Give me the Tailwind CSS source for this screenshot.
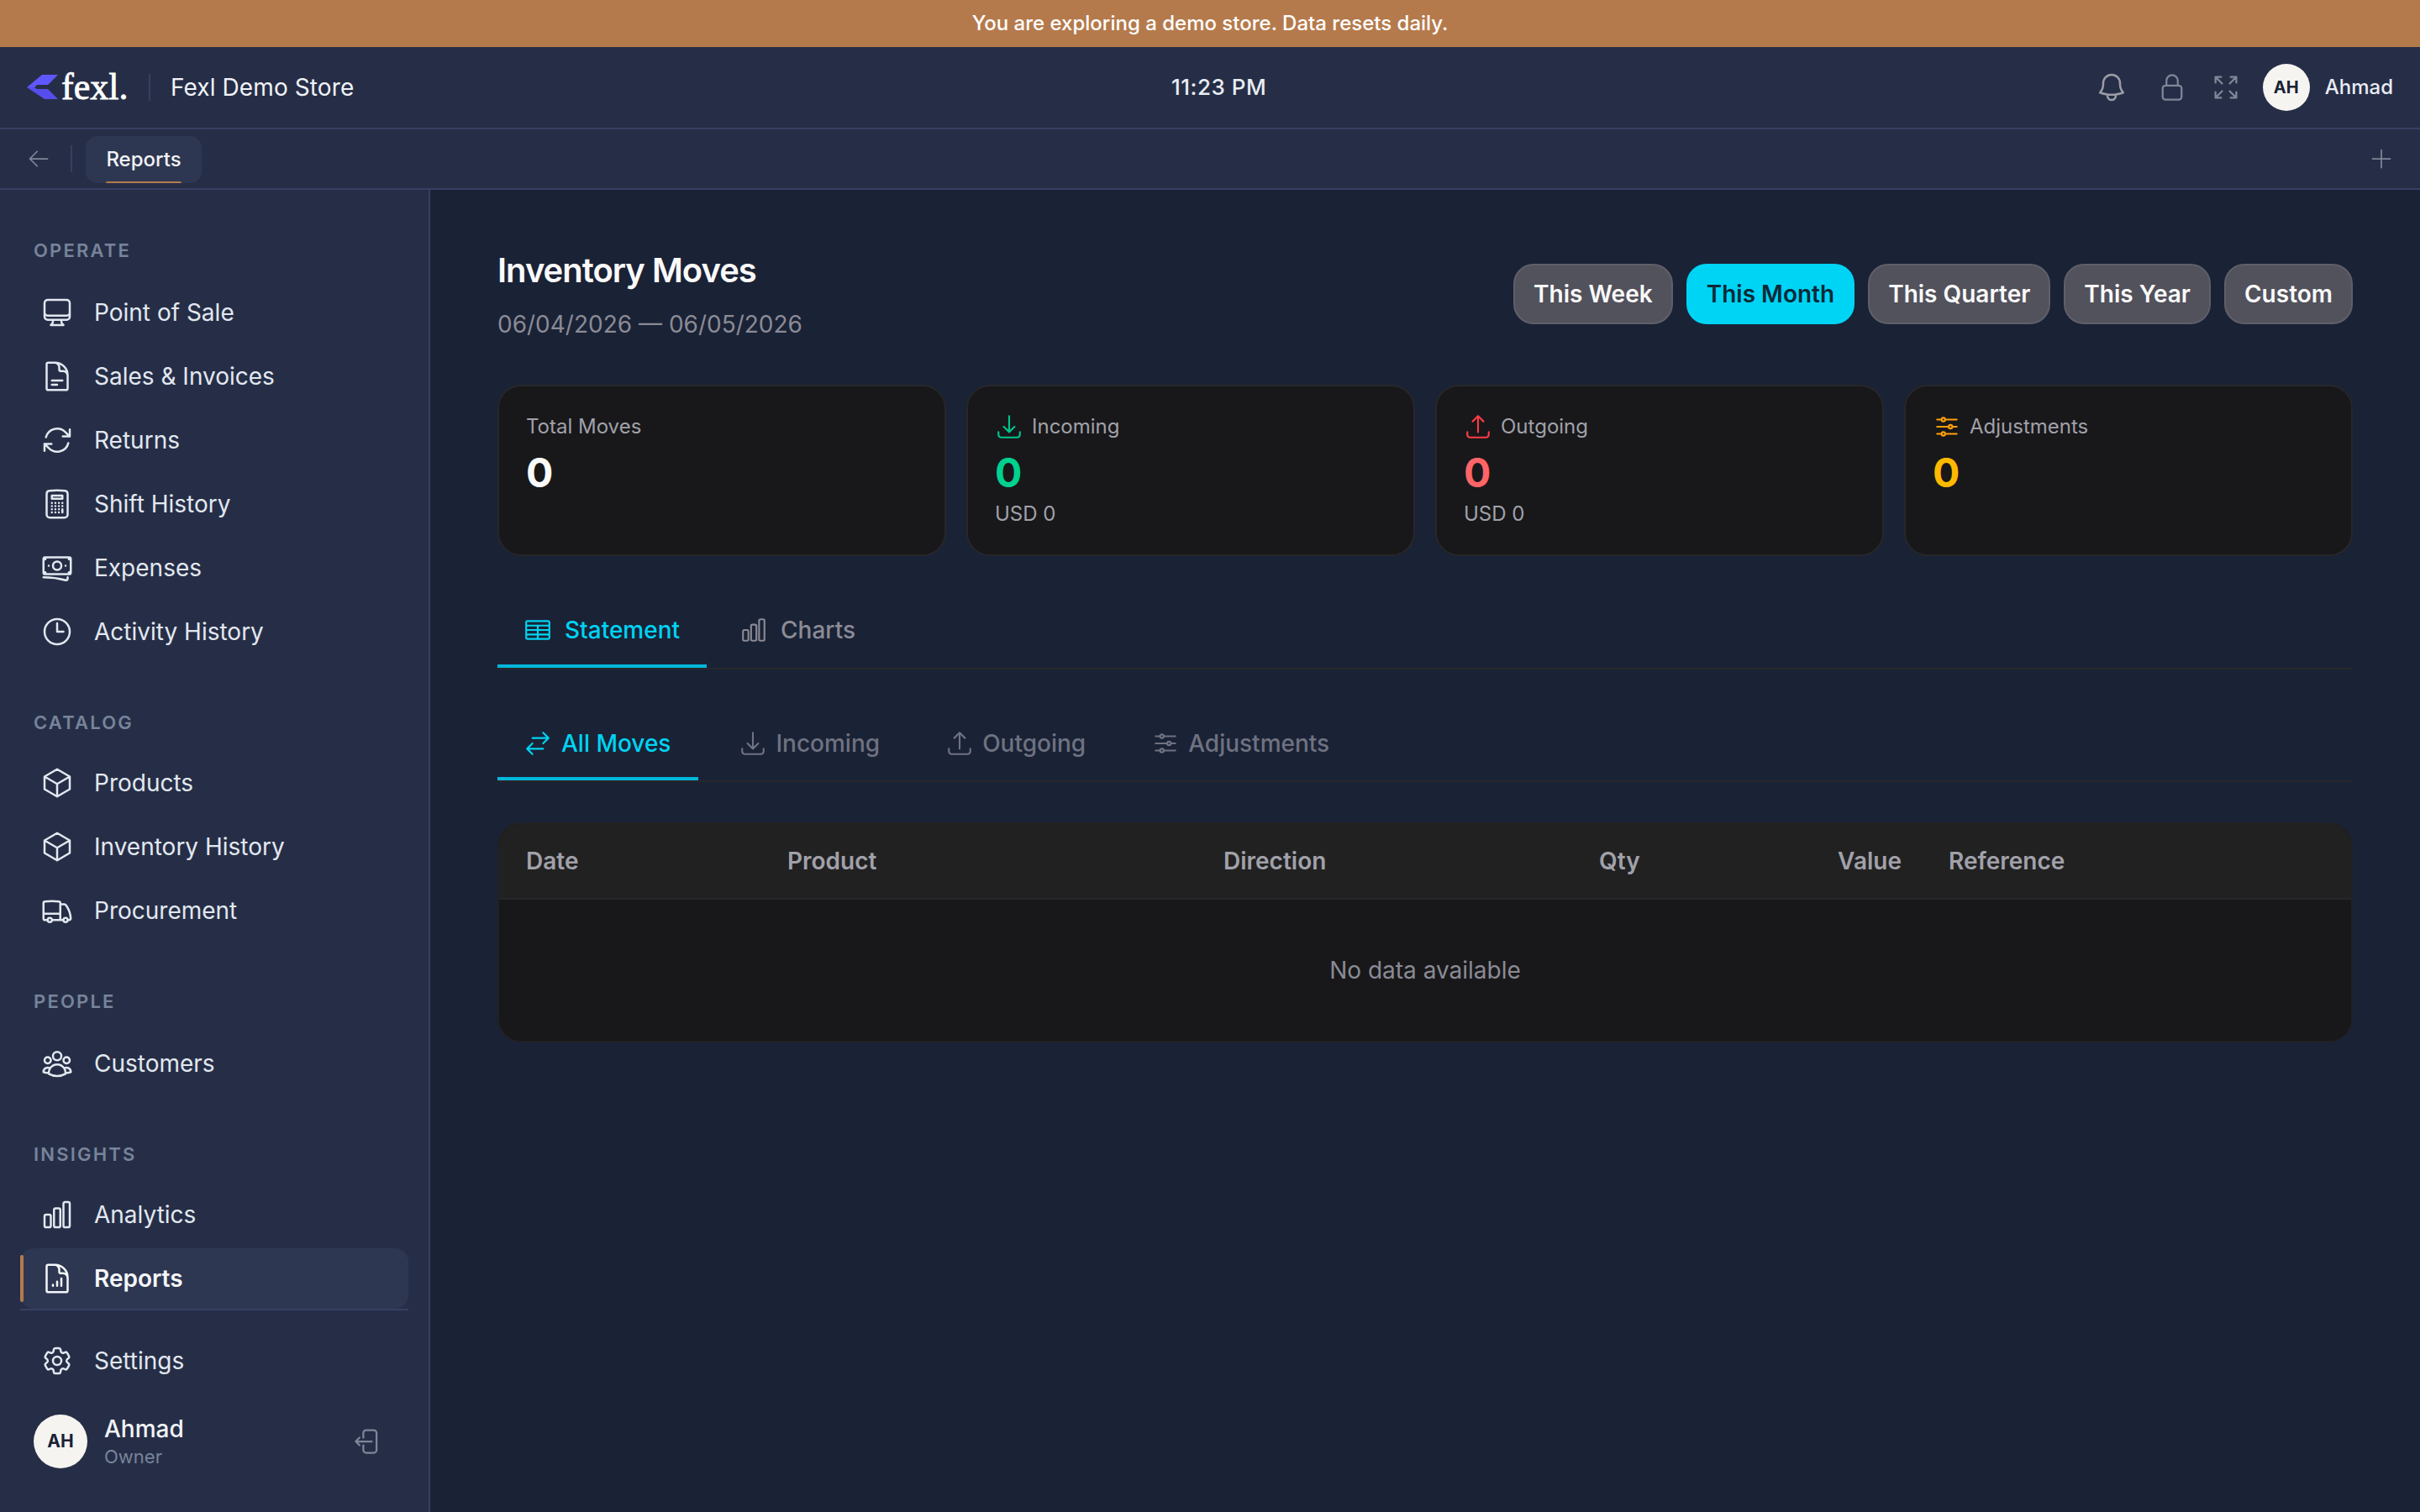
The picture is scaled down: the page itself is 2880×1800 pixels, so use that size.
<!DOCTYPE html>
<html lang="en">
<head>
<meta charset="UTF-8">
<title>Fexl Demo Store - Reports</title>
<script src="https://cdn.jsdelivr.net/npm/@tailwindcss/browser@4"></script>
</head>
<body class="bg-[#1a2236] font-['Inter','Noto_Sans',sans-serif] text-white w-[2880px] h-[1800px] overflow-hidden flex flex-col">
  <!-- demo banner -->
  <div class="h-[56px] shrink-0 bg-[#b57a4c] flex items-center justify-center text-[24px] font-medium text-white">You are exploring a demo store. Data resets daily.</div>

  <!-- top bar -->
  <header class="h-[98px] shrink-0 bg-[#262e47] border-b-2 border-[#373f63] flex items-center pl-[32px] pr-[32px] relative">
    <svg class="w-[38px] h-[30px] shrink-0" viewBox="0 0 38 30"><path fill="#5f57ff" d="M0 15 18 0h19L25 12H12l-3 3z"/><path fill="#554eea" d="M0 15h9l3 2h13l12 12H21z"/></svg>
    <span class="ml-[3px] w-[80px] font-['Liberation_Serif',serif] font-normal text-[44px] leading-none text-white [-webkit-text-stroke:0.8px_white]">fexl.</span>
    <div class="ml-[24px] w-[2px] h-[32px] bg-[#373f63]"></div>
    <span class="ml-[24px] text-[28px] font-normal tracking-[0.1px] text-[#f1f3f7]">Fexl Demo Store</span>
    <span class="absolute left-[1394px] -mt-[2px] text-[26px] font-medium tracking-[0.5px] text-[#e9ecf3]">11:23 PM</span>
    <div class="ml-auto flex items-center">
      <svg class="w-[40px] h-[40px] text-[#9a9ca6]" fill="none" viewBox="0 0 24 24" stroke="currentColor" stroke-width="1.5"><path stroke-linecap="round" stroke-linejoin="round" d="M14.857 17.082a23.848 23.848 0 0 0 5.454-1.31A8.967 8.967 0 0 1 18 9.75V9A6 6 0 0 0 6 9v.75a8.967 8.967 0 0 1-2.312 6.022c1.733.64 3.56 1.085 5.455 1.31m5.714 0a24.255 24.255 0 0 1-5.714 0m5.714 0a3 3 0 1 1-5.714 0"/></svg>
      <svg class="ml-[34px] w-[36px] h-[36px] text-[#7e8798]" fill="none" viewBox="0 0 24 24" stroke="currentColor" stroke-width="1.5"><path stroke-linecap="round" stroke-linejoin="round" d="M16.5 10.5V6.75a4.5 4.5 0 1 0-9 0v3.75m-.75 11.25h10.5a2.25 2.25 0 0 0 2.25-2.25v-6.75a2.25 2.25 0 0 0-2.25-2.25H6.75a2.25 2.25 0 0 0-2.25 2.25v6.75a2.25 2.25 0 0 0 2.25 2.25Z"/></svg>
      <svg class="ml-[28px] w-[36px] h-[36px] text-[#7e8798]" fill="none" viewBox="0 0 24 24" stroke="currentColor" stroke-width="1.5"><path stroke-linecap="round" stroke-linejoin="round" d="M3.75 3.75v4.5m0-4.5h4.5m-4.5 0L9 9M3.75 20.25v-4.5m0 4.5h4.5m-4.5 0L9 15M20.25 3.75h-4.5m4.5 0v4.5m0-4.5L15 9m5.25 11.25h-4.5m4.5 0v-4.5m0 4.5L15 15"/></svg>
      <div class="ml-[26px] w-[56px] h-[56px] rounded-full bg-[#f5f4f1] text-[#1a2236] flex items-center justify-center text-[20px] font-bold">AH</div>
      <span class="ml-[18px] text-[24px] font-medium text-[#e9ecf3]">Ahmad</span>
    </div>
  </header>

  <!-- tab strip -->
  <div class="h-[72px] shrink-0 bg-[#262e47] border-b-2 border-[#373f63] flex items-center pl-[32px] pr-[32px]">
    <svg class="w-[28px] h-[28px] text-[#7e8798]" fill="none" viewBox="0 0 24 24" stroke="currentColor" stroke-width="1.5"><path stroke-linecap="round" stroke-linejoin="round" d="M10.5 19.5 3 12m0 0 7.5-7.5M3 12h18"/></svg>
    <div class="ml-[24px] w-[2px] h-[32px] bg-[#373f63]"></div>
    <div class="ml-[16px] mt-[2px] relative h-[56px] w-[138px] rounded-[14px] bg-[#2e3751] flex items-center justify-center text-[24px] font-medium text-[#f1f3f7]">
      Reports
      <div class="absolute bottom-0 left-[24px] right-[24px] h-[2px] rounded-t bg-[#b57a4c]"></div>
    </div>
    <svg class="ml-auto w-[28px] h-[28px] text-[#7e8798]" fill="none" viewBox="0 0 24 24" stroke="currentColor" stroke-width="1.5"><path stroke-linecap="round" stroke-linejoin="round" d="M12 3v18m9-9H3"/></svg>
  </div>

  <div class="flex-1 flex min-h-0">
    <!-- sidebar -->
    <aside class="w-[512px] shrink-0 bg-[#262e47] border-r-2 border-[#373f63] flex flex-col pl-[24px] pr-[24px]">
      <div class="flex-1">
        <div class="h-[110px] pl-[16px] pt-[57px] text-[22px] leading-[30px] font-semibold tracking-[2.2px] text-[#77849a]">OPERATE</div>
        <nav class="flex flex-col gap-[4px] text-[28px] text-[#e2e8f0]">
          <a class="h-[72px] flex items-center gap-[24px] pl-[24px]"><svg class="w-[40px] h-[40px]" fill="none" viewBox="0 0 24 24" stroke="currentColor" stroke-width="1.5"><path stroke-linecap="round" stroke-linejoin="round" d="M9 17.25v1.007a3 3 0 0 1-.879 2.122L7.5 21h9l-.621-.621A3 3 0 0 1 15 18.257V17.25m6-12V15a2.25 2.25 0 0 1-2.25 2.25H5.25A2.25 2.25 0 0 1 3 15V5.25m18 0A2.25 2.25 0 0 0 18.75 3H5.25A2.25 2.25 0 0 0 3 5.25m18 0V12a2.25 2.25 0 0 1-2.25 2.25H5.25A2.25 2.25 0 0 1 3 12V5.25"/></svg>Point of Sale</a>
          <a class="h-[72px] flex items-center gap-[24px] pl-[24px]"><svg class="w-[40px] h-[40px]" fill="none" viewBox="0 0 24 24" stroke="currentColor" stroke-width="1.5"><path stroke-linecap="round" stroke-linejoin="round" d="M19.5 14.25v-2.625a3.375 3.375 0 0 0-3.375-3.375h-1.5A1.125 1.125 0 0 1 13.5 7.125v-1.5a3.375 3.375 0 0 0-3.375-3.375H8.25m0 12.75h7.5m-7.5 3H12M10.5 2.25H5.625c-.621 0-1.125.504-1.125 1.125v17.25c0 .621.504 1.125 1.125 1.125h12.75c.621 0 1.125-.504 1.125-1.125V11.25a9 9 0 0 0-9-9Z"/></svg>Sales &amp; Invoices</a>
          <a class="h-[72px] flex items-center gap-[24px] pl-[24px]"><svg class="w-[40px] h-[40px]" fill="none" viewBox="0 0 24 24" stroke="currentColor" stroke-width="1.5"><path stroke-linecap="round" stroke-linejoin="round" d="M16.023 9.348h4.992v-.001M2.985 19.644v-4.992m0 0h4.992m-4.993 0 3.181 3.183a8.25 8.25 0 0 0 13.803-3.7M4.031 9.865a8.25 8.25 0 0 1 13.803-3.7l3.181 3.182m0-4.991v4.99"/></svg>Returns</a>
          <a class="h-[72px] flex items-center gap-[24px] pl-[24px]"><svg class="w-[40px] h-[40px]" fill="none" viewBox="0 0 24 24" stroke="currentColor" stroke-width="1.5"><path stroke-linecap="round" stroke-linejoin="round" d="M15.75 15.75V18m-7.5-6.75h.008v.008H8.25v-.008Zm0 2.25h.008v.008H8.25V13.5Zm0 2.25h.008v.008H8.25v-.008Zm0 2.25h.008v.008H8.25V18Zm2.498-6.75h.007v.008h-.007v-.008Zm0 2.25h.007v.008h-.007V13.5Zm0 2.25h.007v.008h-.007v-.008Zm0 2.25h.007v.008h-.007V18Zm2.504-6.75h.008v.008h-.008v-.008Zm0 2.25h.008v.008h-.008V13.5Zm0 2.25h.008v.008h-.008v-.008Zm0 2.25h.008v.008h-.008V18Zm2.498-6.75h.008v.008h-.008v-.008Zm0 2.25h.008v.008h-.008V13.5ZM8.25 6h7.5v2.25h-7.5V6ZM12 2.25c-1.892 0-3.758.11-5.593.322C5.307 2.7 4.5 3.65 4.5 4.757V19.5a2.25 2.25 0 0 0 2.25 2.25h10.5a2.25 2.25 0 0 0 2.25-2.25V4.757c0-1.108-.806-2.057-1.907-2.185A48.507 48.507 0 0 0 12 2.25Z"/></svg>Shift History</a>
          <a class="h-[72px] flex items-center gap-[24px] pl-[24px]"><svg class="w-[40px] h-[40px]" fill="none" viewBox="0 0 24 24" stroke="currentColor" stroke-width="1.5"><path stroke-linecap="round" stroke-linejoin="round" d="M2.25 18.75a60.07 60.07 0 0 1 15.797 2.101c.727.198 1.453-.342 1.453-1.096V18.75M3.75 4.5v.75A.75.75 0 0 1 3 6h-.75m0 0v-.375c0-.621.504-1.125 1.125-1.125H20.25M2.25 6v9m18-10.5v.75c0 .414.336.75.75.75h.75m-1.5-1.5h.375c.621 0 1.125.504 1.125 1.125v9.75c0 .621-.504 1.125-1.125 1.125h-.375m1.5-1.5H21a.75.75 0 0 0-.75.75v.75m0 0H3.75m0 0h-.375a1.125 1.125 0 0 1-1.125-1.125V15m1.5 1.5v-.75A.75.75 0 0 0 3 15h-.75M15 10.5a3 3 0 1 1-6 0 3 3 0 0 1 6 0Zm3 0h.008v.008H18V10.5Zm-12 0h.008v.008H6V10.5Z"/></svg>Expenses</a>
          <a class="h-[72px] flex items-center gap-[24px] pl-[24px]"><svg class="w-[40px] h-[40px]" fill="none" viewBox="0 0 24 24" stroke="currentColor" stroke-width="1.5"><path stroke-linecap="round" stroke-linejoin="round" d="M12 6v6h4.5m4.5 0a9 9 0 1 1-18 0 9 9 0 0 1 18 0Z"/></svg>Activity History</a>
        </nav>
        <div class="h-[108px] pl-[16px] pt-[57px] text-[22px] leading-[30px] font-semibold tracking-[2.2px] text-[#77849a]">CATALOG</div>
        <nav class="flex flex-col gap-[4px] text-[28px] text-[#e2e8f0]">
          <a class="h-[72px] flex items-center gap-[24px] pl-[24px]"><svg class="w-[40px] h-[40px]" fill="none" viewBox="0 0 24 24" stroke="currentColor" stroke-width="1.5"><path stroke-linecap="round" stroke-linejoin="round" d="m21 7.5-9-5.25L3 7.5m18 0-9 5.25m9-5.25v9l-9 5.25M3 7.5l9 5.25M3 7.5v9l9 5.25m0-9v9"/></svg>Products</a>
          <a class="h-[72px] flex items-center gap-[24px] pl-[24px]"><svg class="w-[40px] h-[40px]" fill="none" viewBox="0 0 24 24" stroke="currentColor" stroke-width="1.5"><path stroke-linecap="round" stroke-linejoin="round" d="m21 7.5-9-5.25L3 7.5m18 0-9 5.25m9-5.25v9l-9 5.25M3 7.5l9 5.25M3 7.5v9l9 5.25m0-9v9"/></svg>Inventory History</a>
          <a class="h-[72px] flex items-center gap-[24px] pl-[24px]"><svg class="w-[40px] h-[40px]" fill="none" viewBox="0 0 24 24" stroke="currentColor" stroke-width="1.5"><path stroke-linecap="round" stroke-linejoin="round" d="M8.25 18.75a1.5 1.5 0 0 1-3 0m3 0a1.5 1.5 0 0 0-3 0m3 0h6m-9 0H3.375a1.125 1.125 0 0 1-1.125-1.125V14.25m17.25 4.5a1.5 1.5 0 0 1-3 0m3 0a1.5 1.5 0 0 0-3 0m3 0h1.125c.621 0 1.129-.504 1.09-1.124a17.902 17.902 0 0 0-3.213-9.193 2.056 2.056 0 0 0-1.58-.86H14.25M16.5 18.75h-2.25m0-11.177v-.958c0-.568-.422-1.048-.987-1.106a48.554 48.554 0 0 0-10.026 0 1.106 1.106 0 0 0-.987 1.106v7.635m12-6.677v6.677m0 4.5v-4.5m0 0h-12"/></svg>Procurement</a>
        </nav>
        <div class="h-[110px] pl-[16px] pt-[57px] text-[22px] leading-[30px] font-semibold tracking-[2.2px] text-[#77849a]">PEOPLE</div>
        <nav class="flex flex-col gap-[4px] text-[28px] text-[#e2e8f0]">
          <a class="h-[72px] flex items-center gap-[24px] pl-[24px]"><svg class="w-[40px] h-[40px]" fill="none" viewBox="0 0 24 24" stroke="currentColor" stroke-width="1.5"><path stroke-linecap="round" stroke-linejoin="round" d="M18 18.72a9.094 9.094 0 0 0 3.741-.479 3 3 0 0 0-4.682-2.72m.94 3.198.001.031c0 .225-.012.447-.037.666A11.944 11.944 0 0 1 12 21c-2.17 0-4.207-.576-5.963-1.584A6.062 6.062 0 0 1 6 18.719m12 0a5.971 5.971 0 0 0-.941-3.197m0 0A5.995 5.995 0 0 0 12 12.75a5.995 5.995 0 0 0-5.058 2.772m0 0a3 3 0 0 0-4.681 2.72 8.986 8.986 0 0 0 3.74.477m.94-3.197a5.971 5.971 0 0 0-.94 3.197M15 6.75a3 3 0 1 1-6 0 3 3 0 0 1 6 0Zm6 3a2.25 2.25 0 1 1-4.5 0 2.25 2.25 0 0 1 4.5 0Zm-13.5 0a2.25 2.25 0 1 1-4.5 0 2.25 2.25 0 0 1 4.5 0Z"/></svg>Customers</a>
        </nav>
        <div class="h-[108px] pl-[16px] pt-[57px] text-[22px] leading-[30px] font-semibold tracking-[2.2px] text-[#77849a]">INSIGHTS</div>
        <nav class="flex flex-col gap-[4px] text-[28px] text-[#e2e8f0]">
          <a class="h-[72px] flex items-center gap-[24px] pl-[24px]"><svg class="w-[40px] h-[40px]" fill="none" viewBox="0 0 24 24" stroke="currentColor" stroke-width="1.5"><path stroke-linecap="round" stroke-linejoin="round" d="M3 13.125C3 12.504 3.504 12 4.125 12h2.25c.621 0 1.125.504 1.125 1.125v6.75C7.5 20.496 6.996 21 6.375 21h-2.25A1.125 1.125 0 0 1 3 19.875v-6.75ZM9.75 8.625c0-.621.504-1.125 1.125-1.125h2.25c.621 0 1.125.504 1.125 1.125v11.25c0 .621-.504 1.125-1.125 1.125h-2.25a1.125 1.125 0 0 1-1.125-1.125V8.625ZM16.5 4.125c0-.621.504-1.125 1.125-1.125h2.25C20.496 3 21 3.504 21 4.125v15.75c0 .621-.504 1.125-1.125 1.125h-2.25a1.125 1.125 0 0 1-1.125-1.125V4.125Z"/></svg>Analytics</a>
          <a class="relative h-[72px] flex items-center gap-[24px] pl-[24px] rounded-[16px] bg-[#2e3751] font-semibold text-[#f4f6fa]"><span class="absolute left-0 top-[8px] bottom-[8px] w-[4px] rounded-full bg-[#b57a4c]"></span><svg class="w-[40px] h-[40px]" fill="none" viewBox="0 0 24 24" stroke="currentColor" stroke-width="1.5"><path stroke-linecap="round" stroke-linejoin="round" d="M19.5 14.25v-2.625a3.375 3.375 0 0 0-3.375-3.375h-1.5A1.125 1.125 0 0 1 13.5 7.125v-1.5a3.375 3.375 0 0 0-3.375-3.375H8.25M9 16.5v.75m3-3v3M15 12v5.25m-4.5-15H5.625c-.621 0-1.125.504-1.125 1.125v17.25c0 .621.504 1.125 1.125 1.125h12.75c.621 0 1.125-.504 1.125-1.125V11.25a9 9 0 0 0-9-9Z"/></svg>Reports</a>
        </nav>
      </div>
      <!-- sidebar footer -->
      <div class="border-t-2 border-[#373f63] h-[242px] shrink-0">
        <a class="mt-[24px] h-[72px] flex items-center gap-[24px] pl-[24px] text-[28px] text-[#e2e8f0]"><svg class="w-[40px] h-[40px]" fill="none" viewBox="0 0 24 24" stroke="currentColor" stroke-width="1.5"><path stroke-linecap="round" stroke-linejoin="round" d="M9.594 3.94c.09-.542.56-.94 1.11-.94h2.593c.55 0 1.02.398 1.11.94l.213 1.281c.063.374.313.686.645.87.074.04.147.083.22.127.325.196.72.257 1.075.124l1.217-.456a1.125 1.125 0 0 1 1.37.49l1.296 2.247a1.125 1.125 0 0 1-.26 1.431l-1.003.827c-.293.241-.438.613-.43.992a7.723 7.723 0 0 1 0 .255c-.008.378.137.75.43.991l1.004.827c.424.35.534.955.26 1.43l-1.298 2.247a1.125 1.125 0 0 1-1.369.491l-1.217-.456c-.355-.133-.75-.072-1.076.124a6.47 6.47 0 0 1-.22.128c-.331.183-.581.495-.644.869l-.213 1.281c-.09.543-.56.94-1.11.94h-2.594c-.55 0-1.019-.398-1.11-.94l-.213-1.281c-.062-.374-.312-.686-.644-.87a6.52 6.52 0 0 1-.22-.127c-.325-.196-.72-.257-1.076-.124l-1.217.456a1.125 1.125 0 0 1-1.369-.49l-1.297-2.247a1.125 1.125 0 0 1 .26-1.431l1.004-.827c.292-.24.437-.613.43-.991a6.932 6.932 0 0 1 0-.255c.007-.38-.138-.751-.43-.992l-1.004-.827a1.125 1.125 0 0 1-.26-1.43l1.297-2.247a1.125 1.125 0 0 1 1.37-.491l1.216.456c.356.133.751.072 1.076-.124.072-.044.146-.086.22-.128.332-.183.582-.495.644-.869l.214-1.28Z"/><path stroke-linecap="round" stroke-linejoin="round" d="M15 12a3 3 0 1 1-6 0 3 3 0 0 1 6 0Z"/></svg>Settings</a>
        <div class="mt-[27px] pl-[16px] flex items-center">
          <div class="w-[64px] h-[64px] rounded-full bg-[#f5f4f1] text-[#1a2236] flex items-center justify-center text-[21px] font-bold">AH</div>
          <div class="ml-[20px] flex flex-col">
            <span class="text-[28px] leading-[36px] font-medium text-[#f1f3f7]">Ahmad</span>
            <span class="text-[22px] leading-[30px] text-[#77849a]">Owner</span>
          </div>
          <svg class="ml-auto mr-[30px] w-[36px] h-[36px] text-[#7e8798]" fill="none" viewBox="0 0 24 24" stroke="currentColor" stroke-width="1.5"><path stroke-linecap="round" stroke-linejoin="round" d="M8.25 9V5.25A2.25 2.25 0 0 1 10.5 3h6a2.25 2.25 0 0 1 2.25 2.25v13.5A2.25 2.25 0 0 1 16.5 21h-6a2.25 2.25 0 0 1-2.25-2.25V15m-3 0-3-3m0 0 3-3m-3 3H15"/></svg>
        </div>
      </div>
    </aside>

    <!-- main -->
    <main class="flex-1 pl-[80px] pr-[80px] pt-[72px]">
      <div class="flex justify-between items-start">
        <div>
          <h1 class="text-[40px] leading-[48px] font-semibold tracking-[-1px] text-[#fafafa]">Inventory Moves</h1>
          <p class="mt-[22px] text-[28px] leading-[36px] text-[#8b8b95]">06/04/2026 — 06/05/2026</p>
        </div>
        <div class="mt-[16px] flex gap-[16px] text-[28px] font-semibold">
          <button class="h-[72px] px-[22px] rounded-[24px] bg-[#52525c] border-2 border-[#5f5f69] text-[#fafafa]">This Week</button>
          <button class="h-[72px] px-[24px] rounded-[24px] bg-[#00d4f5] text-[#0a2a38]">This Month</button>
          <button class="h-[72px] px-[22px] rounded-[24px] bg-[#52525c] border-2 border-[#5f5f69] text-[#fafafa]">This Quarter</button>
          <button class="h-[72px] px-[22px] rounded-[24px] bg-[#52525c] border-2 border-[#5f5f69] text-[#fafafa]">This Year</button>
          <button class="h-[72px] px-[22px] rounded-[24px] bg-[#52525c] border-2 border-[#5f5f69] text-[#fafafa]">Custom</button>
        </div>
      </div>

      <!-- stat cards -->
      <div class="mt-[54px] grid grid-cols-4 gap-[24px]">
        <div class="h-[204px] rounded-[28px] bg-[#18181a] border-2 border-[#27272a] px-[32px] pt-[30px]">
          <div class="h-[36px] flex items-center text-[24px] text-[#a1a1aa]">Total Moves</div>
          <div class="mt-[7px] text-[48px] leading-[60px] font-bold text-[#fafafa]">0</div>
        </div>
        <div class="h-[204px] rounded-[28px] bg-[#18181a] border-2 border-[#27272a] px-[32px] pt-[30px]">
          <div class="h-[36px] flex items-center gap-[10px] text-[24px] text-[#a1a1aa]"><svg class="w-[34px] h-[34px] text-[#00c48c]" fill="none" viewBox="0 0 24 24" stroke="currentColor" stroke-width="1.5"><path stroke-linecap="round" stroke-linejoin="round" d="M3 16.5v2.25A2.25 2.25 0 0 0 5.25 21h13.5A2.25 2.25 0 0 0 21 18.75V16.5M16.5 12 12 16.5m0 0L7.5 12m4.5 4.5V3"/></svg>Incoming</div>
          <div class="mt-[7px] text-[48px] leading-[60px] font-bold text-[#00d18f]">0</div>
          <div class="mt-[1px] text-[24px] leading-[36px] text-[#a1a1aa]">USD 0</div>
        </div>
        <div class="h-[204px] rounded-[28px] bg-[#18181a] border-2 border-[#27272a] px-[32px] pt-[30px]">
          <div class="h-[36px] flex items-center gap-[10px] text-[24px] text-[#a1a1aa]"><svg class="w-[34px] h-[34px] text-[#ff3b47]" fill="none" viewBox="0 0 24 24" stroke="currentColor" stroke-width="1.5"><path stroke-linecap="round" stroke-linejoin="round" d="M3 16.5v2.25A2.25 2.25 0 0 0 5.25 21h13.5A2.25 2.25 0 0 0 21 18.75V16.5m-13.5-9L12 3m0 0 4.5 4.5M12 3v13.5"/></svg>Outgoing</div>
          <div class="mt-[7px] text-[48px] leading-[60px] font-bold text-[#ff6467]">0</div>
          <div class="mt-[1px] text-[24px] leading-[36px] text-[#a1a1aa]">USD 0</div>
        </div>
        <div class="h-[204px] rounded-[28px] bg-[#18181a] border-2 border-[#27272a] px-[32px] pt-[30px]">
          <div class="h-[36px] flex items-center gap-[10px] text-[24px] text-[#a1a1aa]"><svg class="w-[34px] h-[34px] text-[#ff9f0a]" fill="none" viewBox="0 0 24 24" stroke="currentColor" stroke-width="1.5"><path stroke-linecap="round" stroke-linejoin="round" d="M10.5 6h9.75M10.5 6a1.5 1.5 0 1 1-3 0m3 0a1.5 1.5 0 1 0-3 0M3.75 6H7.5m3 12h9.75m-9.75 0a1.5 1.5 0 0 1-3 0m3 0a1.5 1.5 0 0 0-3 0m-3.75 0H7.5m9-6h3.75m-3.75 0a1.5 1.5 0 0 1-3 0m3 0a1.5 1.5 0 0 0-3 0m-9.75 0h9.75"/></svg>Adjustments</div>
          <div class="mt-[7px] text-[48px] leading-[60px] font-bold text-[#ffb900]">0</div>
        </div>
      </div>

      <!-- view tabs -->
      <div class="mt-[49px] h-[86px] border-b-2 border-[#27272a] flex gap-[8px] text-[28px] font-medium">
        <div class="h-[84px] pb-[2px] pl-[31px] pr-[32px] flex items-center gap-[15px] border-b-4 border-[#00b8db] text-[#00d3f2]"><svg class="w-[34px] h-[34px]" fill="none" viewBox="0 0 24 24" stroke="currentColor" stroke-width="1.5"><path stroke-linecap="round" stroke-linejoin="round" d="M3.375 19.5h17.25m-17.25 0a1.125 1.125 0 0 1-1.125-1.125M3.375 19.5h7.5c.621 0 1.125-.504 1.125-1.125m-9.75 0V5.625m0 12.75v-1.5c0-.621.504-1.125 1.125-1.125m18.375 2.625V5.625m0 12.75c0 .621-.504 1.125-1.125 1.125m1.125-1.125v-1.5c0-.621-.504-1.125-1.125-1.125m0 3.75h-7.5A1.125 1.125 0 0 1 12 18.375m9.75-12.75c0-.621-.504-1.125-1.125-1.125H3.375c-.621 0-1.125.504-1.125 1.125m19.5 0v1.5c0 .621-.504 1.125-1.125 1.125M2.25 5.625v1.5c0 .621.504 1.125 1.125 1.125m0 0h17.25m-17.25 0h7.5c.621 0 1.125.504 1.125 1.125M3.375 8.25c-.621 0-1.125.504-1.125 1.125v1.5c0 .621.504 1.125 1.125 1.125m17.25-3.75h-7.5c-.621 0-1.125.504-1.125 1.125m8.625-1.125c.621 0 1.125.504 1.125 1.125v1.5c0 .621-.504 1.125-1.125 1.125m-17.25 0h7.5m-7.5 0c-.621 0-1.125.504-1.125 1.125v1.5c0 .621.504 1.125 1.125 1.125M12 10.875v-1.5m0 1.5c0 .621-.504 1.125-1.125 1.125M12 10.875c0 .621.504 1.125 1.125 1.125m-2.25 0c.621 0 1.125.504 1.125 1.125M13.125 12h7.5m-7.5 0c-.621 0-1.125.504-1.125 1.125M20.625 12c.621 0 1.125.504 1.125 1.125v1.5c0 .621-.504 1.125-1.125 1.125m-17.25 0h7.5M12 14.625v-1.5m0 1.5c0 .621-.504 1.125-1.125 1.125M12 14.625c0 .621.504 1.125 1.125 1.125m-2.25 0c.621 0 1.125.504 1.125 1.125m0 1.5v-1.5m0 0c0-.621.504-1.125 1.125-1.125m0 0h7.5"/></svg>Statement</div>
        <div class="h-[84px] pb-[6px] pl-[31px] pr-[30px] flex items-center gap-[15px] text-[#8b8b95]"><svg class="w-[34px] h-[34px]" fill="none" viewBox="0 0 24 24" stroke="currentColor" stroke-width="1.5"><path stroke-linecap="round" stroke-linejoin="round" d="M3 13.125C3 12.504 3.504 12 4.125 12h2.25c.621 0 1.125.504 1.125 1.125v6.75C7.5 20.496 6.996 21 6.375 21h-2.25A1.125 1.125 0 0 1 3 19.875v-6.75ZM9.75 8.625c0-.621.504-1.125 1.125-1.125h2.25c.621 0 1.125.504 1.125 1.125v11.25c0 .621-.504 1.125-1.125 1.125h-2.25a1.125 1.125 0 0 1-1.125-1.125V8.625ZM16.5 4.125c0-.621.504-1.125 1.125-1.125h2.25C20.496 3 21 3.504 21 4.125v15.75c0 .621-.504 1.125-1.125 1.125h-2.25a1.125 1.125 0 0 1-1.125-1.125V4.125Z"/></svg>Charts</div>
      </div>

      <!-- direction tabs -->
      <div class="mt-[48px] h-[86px] border-b-2 border-[#27272a] flex gap-[17px] text-[28px] font-medium">
        <div class="h-[84px] pb-[1px] pl-[31px] pr-[33px] flex items-center gap-[11px] border-b-4 border-[#00b8db] text-[#00d3f2]"><svg class="w-[34px] h-[34px]" fill="none" viewBox="0 0 24 24" stroke="currentColor" stroke-width="1.5"><path stroke-linecap="round" stroke-linejoin="round" d="M7.5 21 3 16.5m0 0L7.5 12M3 16.5h13.5m0-13.5L21 7.5m0 0L16.5 12M21 7.5H7.5"/></svg>All Moves</div>
        <div class="h-[84px] pb-[5px] pl-[31px] pr-[30px] flex items-center gap-[10px] text-[#6f7280]"><svg class="w-[34px] h-[34px]" fill="none" viewBox="0 0 24 24" stroke="currentColor" stroke-width="1.5"><path stroke-linecap="round" stroke-linejoin="round" d="M3 16.5v2.25A2.25 2.25 0 0 0 5.25 21h13.5A2.25 2.25 0 0 0 21 18.75V16.5M16.5 12 12 16.5m0 0L7.5 12m4.5 4.5V3"/></svg>Incoming</div>
        <div class="h-[84px] pb-[5px] pl-[31px] pr-[30px] flex items-center gap-[10px] text-[#6f7280]"><svg class="w-[34px] h-[34px]" fill="none" viewBox="0 0 24 24" stroke="currentColor" stroke-width="1.5"><path stroke-linecap="round" stroke-linejoin="round" d="M3 16.5v2.25A2.25 2.25 0 0 0 5.25 21h13.5A2.25 2.25 0 0 0 21 18.75V16.5m-13.5-9L12 3m0 0 4.5 4.5M12 3v13.5"/></svg>Outgoing</div>
        <div class="h-[84px] pb-[5px] pl-[31px] pr-[30px] flex items-center gap-[10px] text-[#6f7280]"><svg class="w-[34px] h-[34px]" fill="none" viewBox="0 0 24 24" stroke="currentColor" stroke-width="1.5"><path stroke-linecap="round" stroke-linejoin="round" d="M10.5 6h9.75M10.5 6a1.5 1.5 0 1 1-3 0m3 0a1.5 1.5 0 1 0-3 0M3.75 6H7.5m3 12h9.75m-9.75 0a1.5 1.5 0 0 1-3 0m3 0a1.5 1.5 0 0 0-3 0m-3.75 0H7.5m9-6h3.75m-3.75 0a1.5 1.5 0 0 1-3 0m3 0a1.5 1.5 0 0 0-3 0m-9.75 0h9.75"/></svg>Adjustments</div>
      </div>

      <!-- table -->
      <div class="mt-[48px] rounded-[28px] overflow-hidden border-2 border-[#212124] bg-[#18181a]">
        <div class="h-[90px] bg-[#212122] border-b-2 border-[#27272a] grid grid-cols-[311px_519px_447px_424px_1fr] items-center text-[28px] font-semibold text-[#a1a1aa]">
          <span class="pl-[32px]">Date</span>
          <span class="pl-[32px]">Product</span>
          <span class="pl-[32px]">Direction</span>
          <span class="flex justify-between pl-[32px] pr-[32px]"><span>Qty</span><span>Value</span></span>
          <span class="pl-[24px]">Reference</span>
        </div>
        <div class="h-[168px] flex items-center justify-center text-[28px] text-[#8b8b95]">No data available</div>
      </div>
    </main>
  </div>
</body>
</html>
